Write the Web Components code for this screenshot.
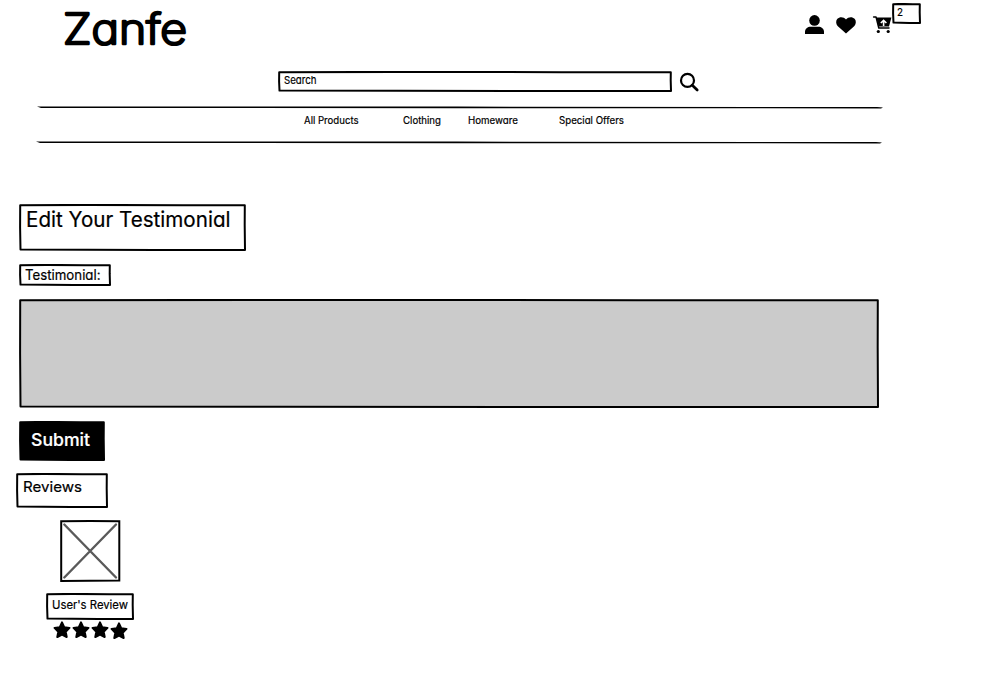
<!DOCTYPE html>
<html lang="en">
<head>
<meta charset="utf-8">
<title>Zanfe</title>
<style>
html,body{margin:0;background:#fff;color:#000;font-family:Inter,"Liberation Sans",sans-serif}
</style>
</head>
<body>
<zanfe-page></zanfe-page>
<script>
// A single line of lettering: baseline sits `size` below the top of the element.
class SketchText extends HTMLElement {
  connectedCallback() {
    const a = n => this.getAttribute(n);
    const size = +a('size'), w = +a('w');
    const root = this.attachShadow({mode: 'open'});
    root.innerHTML = `<style>
      :host{display:block;flex:none;width:${w}px;height:${Math.round(size * 1.3)}px}
      svg{display:block;overflow:visible}
      text{font-family:Inter,"Liberation Sans",sans-serif;font-feature-settings:"cv11" 1;font-size:${size}px;font-weight:${a('weight') || 400};
        fill:currentColor;stroke:currentColor;stroke-width:${a('ink') || 0.2};stroke-linejoin:round;stroke-linecap:round}
    </style><svg width="${w}" height="${Math.round(size * 1.3)}"><text x="0" y="${size}" textLength="${w}" lengthAdjust="spacingAndGlyphs"></text></svg>`;
    root.querySelector('text').textContent = a('label');
  }
}
customElements.define('sketch-text', SketchText);

// Hand-drawn rectangle holding slotted content.
class SketchBox extends HTMLElement {
  connectedCallback() {
    const w = +this.getAttribute('w'), h = +this.getAttribute('h');
    const fill = this.getAttribute('fill') || '#fff';
    const root = this.attachShadow({mode: 'open'});
    root.innerHTML = `<style>
      :host{display:grid;flex:none;width:${w}px;height:${h}px;color:#000}
      svg,.c{grid-area:1/1}
      svg{display:block}
      .c{padding:var(--pt,4px) 0 0 var(--pl,6px)}
    </style>
    <svg width="${w}" height="${h}"><path d="M1.2 1.2 L${w * .3} .9 L${w * .72} 1.2 L${w - 1.2} 1.3 L${w - 1.3} ${h * .45} L${w - 1} ${h - 1.1} L${w * .6} ${h - 1} L${w * .3} ${h - 1.3} L1.5 ${h - 1.4} L1.1 ${h * .5} Z" fill="${fill}" stroke="#000" stroke-width="2" stroke-linejoin="round"/></svg>
    <div class="c"><slot></slot></div>`;
  }
}
customElements.define('sketch-box', SketchBox);

class SketchRule extends HTMLElement {
  connectedCallback() {
    this.attachShadow({mode: 'open'}).innerHTML = `<style>:host{display:block;height:3px}svg{display:block}</style>
    <svg width="846" height="3"><path d="M0 .6 L5 .6 L420 .6 L840 1.1 L846 1.6 L844 2.4 L420 2.2 L4 2 Z"/></svg>`;
  }
}
customElements.define('sketch-rule', SketchRule);

const ICONS = {
  user: [19, 20, '<circle cx="9.5" cy="5.4" r="5.3"/><path d="M0 19V16.8C0 13.7 2.6 11.7 5.7 11.7H13.3C16.4 11.7 19 13.7 19 16.8V19Z"/>'],
  heart: [20, 17, '<path d="M10 16.5L1.6 8.9C-.3 7-.3 3.6 1.4 1.8C3.6-.5 7.6-.4 10 2.5C12.4-.4 16.4-.5 18.6 1.8C20.3 3.6 20.3 7 18.4 8.9Z"/>'],
  cart: [19, 18, '<path d="M.6 .9H3L5.8 12H16" fill="none" stroke="#000" stroke-width="1.5" stroke-linecap="round" stroke-linejoin="round"/><path d="M3.3 1.4H18.4L16 10.4H5.6Z"/><circle cx="5.3" cy="15.5" r="1.6"/><circle cx="15.2" cy="15.5" r="1.6"/><path d="M10.6 10V4.6M7.8 7L10.6 4.3L13.4 7" fill="none" stroke="#fff" stroke-width="1.6"/>'],
  search: [20, 20, '<circle cx="7.5" cy="7.4" r="6.5" fill="none" stroke="#000" stroke-width="2.2"/><path d="M12.3 12.2L17.2 17" stroke="#000" stroke-width="2.7" stroke-linecap="round"/>'],
  star: [18, 18, '<path d="M9 1.4L11.2 6.2L16.5 6.9L12.7 10.7L13.7 16L9 13.6L4.3 16L5.3 10.7L1.5 6.9L6.8 6.2Z" stroke="#000" stroke-width="2" stroke-linejoin="round"/>'],
  picture: [61, 62, '<path d="M1.2 1.3L30 1L59.3 1.2L59.3 60.6L30 60.8L1.2 61Z" fill="#fff" stroke="#000" stroke-width="2"/><path d="M4.3 4.5L56 57.5M56 4.5L4.3 57.5" stroke="#5a5a5a" stroke-width="2.4" stroke-linecap="round"/>']
};
class SketchIcon extends HTMLElement {
  connectedCallback() {
    const [w, h, art] = ICONS[this.getAttribute('name')];
    this.attachShadow({mode: 'open'}).innerHTML = `<style>:host{display:block;flex:none;width:${w}px;height:${h}px}svg{display:block;overflow:visible}</style><svg width="${w}" height="${h}">${art}</svg>`;
  }
}
customElements.define('sketch-icon', SketchIcon);

class ZanfeHeader extends HTMLElement {
  connectedCallback() {
    this.attachShadow({mode: 'open'}).innerHTML = `<style>
      :host{display:block}
      .top{display:flex;height:71px;align-items:flex-start}
      .logo{margin:1px 0 0 63px}
      .acts{display:flex;margin-left:618px}
      .find{display:flex;height:35px;padding-left:278px;gap:8px}
      nav{display:flex;padding-top:4px;height:28px;padding-left:304px}
    </style>
    <div class="top">
      <sketch-text class="logo" label="Zanfe" size="42.5" w="124" weight="200" ink="2.7"></sketch-text>
      <div class="acts">
        <sketch-icon name="user" style="margin-top:15px"></sketch-icon>
        <sketch-icon name="heart" style="margin:17px 0 0 12px"></sketch-icon>
        <sketch-icon name="cart" style="margin:16px 0 0 17px"></sketch-icon>
        <sketch-box w="29" h="21" style="margin-top:3px;--pl:4.5px;--pt:2px"><sketch-text label="2" size="11" w="6"></sketch-text></sketch-box>
      </div>
    </div>
    <div class="find">
      <sketch-box w="394" h="21" style="--pl:5.5px;--pt:2px"><sketch-text label="Search" size="11" w="32.5"></sketch-text></sketch-box>
      <sketch-icon name="search" style="margin-top:2px"></sketch-icon>
    </div>
    <sketch-rule style="margin-left:37px"></sketch-rule>
    <nav>
      <sketch-text label="All Products" size="10.5" w="54.5"></sketch-text>
      <sketch-text label="Clothing" size="10.5" w="38" style="margin-left:44px"></sketch-text>
      <sketch-text label="Homeware" size="10.5" w="50" style="margin-left:27px"></sketch-text>
      <sketch-text label="Special Offers" size="10.5" w="65" style="margin-left:41.5px"></sketch-text>
    </nav>
    <sketch-rule style="margin-left:36px"></sketch-rule>`;
  }
}
customElements.define('zanfe-header', ZanfeHeader);

class ZanfePage extends HTMLElement {
  connectedCallback() {
    this.attachShadow({mode: 'open'}).innerHTML = `<style>
      :host{display:block;width:988px;height:687px;overflow:hidden}
      main{display:flex;flex-direction:column;align-items:flex-start;margin:60px 0 0 19px}
      .stars{display:flex;gap:1px;margin:1px 0 0 34px}
    </style>
    <zanfe-header></zanfe-header>
    <main>
      <sketch-box w="227" h="47" style="--pl:6.6px;--pt:1px"><sketch-text label="Edit Your Testimonial" size="21.5" w="204.5"></sketch-text></sketch-box>
      <sketch-box w="92" h="22" style="margin-top:13px;--pl:6.4px;--pt:2.4px"><sketch-text label="Testimonial:" size="14" w="75.5"></sketch-text></sketch-box>
      <sketch-box w="860" h="109" fill="#cbcbcb" style="margin-top:13px"></sketch-box>
      <sketch-box w="86" h="40" fill="#000" style="margin-top:13px;--pl:12.3px;--pt:7px"><sketch-text label="Submit" size="17.5" w="59" weight="500" style="color:#fff"></sketch-text></sketch-box>
      <sketch-box w="92" h="35" style="margin-top:12px;margin-left:-3px;--pl:6.5px;--pt:4px"><sketch-text label="Reviews" size="14.5" w="59"></sketch-text></sketch-box>
      <sketch-icon name="picture" style="margin:12px 0 0 41px"></sketch-icon>
      <sketch-box w="88" h="27" style="margin:11px 0 0 27px;--pl:5.5px;--pt:4px"><sketch-text label="User's Review" size="11.8" w="76"></sketch-text></sketch-box>
      <div class="stars"><sketch-icon name="star"></sketch-icon><sketch-icon name="star"></sketch-icon><sketch-icon name="star"></sketch-icon><sketch-icon name="star" style="margin-top:.5px"></sketch-icon></div>
    </main>`;
  }
}
customElements.define('zanfe-page', ZanfePage);
</script>
</body>
</html>
